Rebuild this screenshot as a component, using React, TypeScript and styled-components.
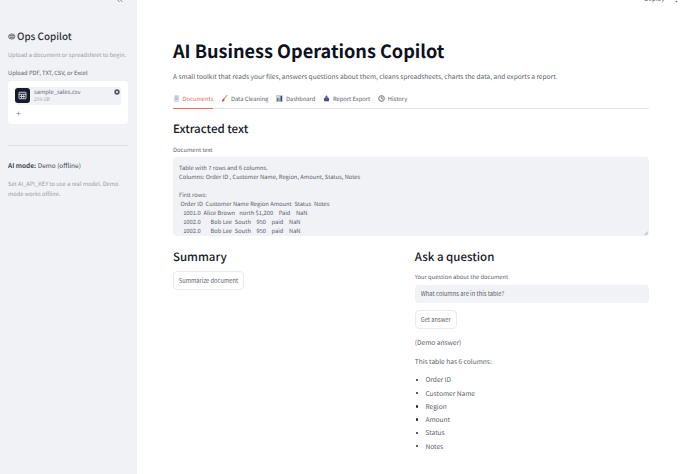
import React from "react";
import styled, { createGlobalStyle } from "styled-components";

const Global = createGlobalStyle`
  *, *::before, *::after { box-sizing: border-box; }
  html, body { margin: 0; padding: 0; background: #fff; overflow: hidden; }
  body {
    font-family: "Source Sans Pro", "Noto Sans CJK SC", "Noto Sans", sans-serif;
    color: #5b5d66;
    text-rendering: geometricPrecision;
    -webkit-font-smoothing: antialiased;
  }
  h1, h2, p, ul { margin: 0; padding: 0; font-weight: 400; }
  button, input { font-family: inherit; color: inherit; margin: 0; }
`;

const Page = styled.div`
  display: flex;
  width: 680px;
  height: 474px;
  overflow: hidden;
  white-space: nowrap;
`;

const Sidebar = styled.aside`
  width: 136.5px;
  height: 474px;
  flex: none;
  background: #f0f2f6;
  padding: 0 9px 0 8px;
  display: flex;
  flex-direction: column;
`;

const Collapse = styled.div`
  height: 28px;
  display: flex;
  justify-content: flex-end;
  padding-right: 4.5px;
  svg { margin-top: -4px; }
`;

const Brand = styled.h2`
  display: flex;
  align-items: center;
  gap: 1.5px;
  height: 16px;
  font-size: 9.85px;
  line-height: 16px;
  font-weight: 500;
  color: #31333f;
`;

const Caption = styled.p`
  font-size: 5.71px;
  line-height: 10px;
  color: #9a9ca5;
`;

const BrandCaption = styled(Caption)`
  margin-top: 6px;
`;

const Label = styled.div`
  font-size: 5.78px;
  line-height: 10px;
  height: 10px;
  color: #5b5d66;
`;

const UploadLabel = styled(Label)`
  margin-top: 8px;
`;

const UploadBox = styled.div`
  margin-top: 2.5px;
  height: 43px;
  border-radius: 4px;
  background: #fff;
  padding: 6px 6.5px 0 7px;
`;

const FileChip = styled.div`
  display: flex;
  height: 18px;
  border-radius: 3px;
  background: #f0f2f6;
  padding-right: 1.5px;
`;

const FileIcon = styled.div`
  width: 15px;
  height: 15px;
  margin-top: 1px;
  border-radius: 3px;
  background: #151a2d;
  display: flex;
  align-items: center;
  justify-content: center;
`;

const FileInfo = styled.div`
  flex: 1;
  padding-left: 4px;
`;

const FileName = styled.div`
  font-size: 5.78px;
  line-height: 8px;
  padding-top: 1px;
  height: 9px;
  color: #6a6c76;
`;

const FileSize = styled.div`
  font-size: 5px;
  line-height: 7px;
  color: #a5a7af;
`;

const RemoveIcon = styled.div`
  padding-top: 1px;
  line-height: 0;
`;

const AddFile = styled.div`
  margin: 4.5px 0 0 0.5px;
  line-height: 0;
`;

const Divider = styled.div`
  margin: 21.5px 0 14px;
  height: 1px;
  background: #dcdee3;
`;

const Mode = styled.p`
  font-size: 6.5px;
  line-height: 10px;
  height: 10px;
  color: #464852;
  b { font-weight: 600; }
`;

const ModeCaption = styled(Caption)`
  margin-top: 9px;
`;

const Main = styled.main`
  flex: 1;
  padding: 0 31.5px 0 36.5px;
  display: flex;
  flex-direction: column;
`;

const TopBar = styled.div`
  height: 38px;
  flex: none;
  display: flex;
  justify-content: flex-end;
  font-size: 6.2px;
  line-height: 10px;
  margin-right: -29px;
  gap: 10px;
  span { margin-top: -6px; }
  svg { margin-top: -1px; }
`;

const Title = styled.h1`
  height: 26px;
  line-height: 26px;
  font-size: 18.1px;
  font-weight: 700;
  color: #0e1120;
`;

const Intro = styled.p`
  margin-top: 6px;
  height: 12px;
  line-height: 12px;
  font-size: 6.59px;
`;

const Tabs = styled.nav`
  margin-top: 11px;
  height: 16px;
  display: flex;
  gap: 8px;
  border-bottom: 1px solid #e4e5e9;
`;

const Tab = styled.div<{ $active?: boolean }>`
  height: 16px;
  display: flex;
  align-items: flex-start;
  gap: 2.5px;
  font-size: 5.8px;
  line-height: 12px;
  color: ${(p) => (p.$active ? "#e2686a" : "#5b5d66")};
  border-bottom: 1px solid ${(p) => (p.$active ? "#e06a6a" : "transparent")};
  svg { margin-top: 2px; }
`;

const Heading = styled.h2`
  height: 18px;
  line-height: 18px;
  font-size: 11.5px;
  font-weight: 500;
  color: #161927;
`;

const Section = styled.section`
  margin-top: 11px;
`;

const SectionLabel = styled(Label)`
  margin-top: 7px;
`;

const TextArea = styled.div`
  position: relative;
  margin-top: 2px;
  height: 79px;
  border-radius: 4px;
  background: #f0f2f6;
  padding: 5.5px 6px 0;
  overflow: hidden;
  white-space: pre;
  font-size: 5.76px;
  word-spacing: 0.1px;
  line-height: 9px;
  color: #5b5d66;
`;

const ResizeGrip = styled.svg`
  position: absolute;
  right: 1px;
  bottom: 1px;
`;

const Columns = styled.div`
  margin-top: 12px;
  display: grid;
  grid-template-columns: 1fr 1fr;
  column-gap: 8px;
`;

const Button = styled.button<{ $width: number }>`
  display: block;
  width: ${(p) => p.$width}px;
  height: 19px;
  padding: 0;
  border: 1px solid #eaebee;
  border-radius: 4px;
  background: #fff;
  font-size: 5.76px;
  line-height: 17px;
  text-align: center;
`;

const SummaryButton = styled(Button)`
  margin-top: 5px;
`;

const AnswerButton = styled(Button)`
  margin-top: 7px;
`;

const QuestionLabel = styled(Label)`
  margin-top: 6px;
`;

const Input = styled.input`
  display: block;
  margin-top: 2.5px;
  width: 100%;
  height: 18px;
  padding: 0 6px;
  border: 0;
  border-radius: 4px;
  background: #f0f2f6;
  font-size: 5.78px;
  outline: none;
`;

const Answer = styled.p`
  height: 12px;
  line-height: 12px;
  margin-top: 7px;
  font-size: 6.6px;
`;

const List = styled.ul`
  margin-top: 6.7px;
  list-style: none;
`;

const Item = styled.li`
  display: flex;
  align-items: center;
  height: 13.25px;
  font-size: 6.6px;
  line-height: 13px;
  &::before {
    content: "";
    width: 2.4px;
    height: 2.4px;
    border-radius: 50%;
    background: #24262f;
    margin: 0 7px 0 1.3px;
  }
`;

const RobotIcon = () => (
  <svg width="7.5" height="7" viewBox="0 0 15 14">
    <ellipse cx="7.5" cy="7" rx="6.5" ry="5.2" fill="#c5c7cd" stroke="#5b5e68" strokeWidth="1.5" />
    <path d="M3 5.2h9M3.5 9h8M5.500 4.7v2M9.500 4.7v2" stroke="#5b5e68" strokeWidth="1.3" />
  </svg>
);

const SheetIcon = () => (
  <svg width="9" height="9" viewBox="0 0 18 18" fill="none" stroke="#dfe1e8" strokeWidth="1.8">
    <rect x="2" y="2.5" width="14" height="13" rx="1" />
    <path d="M2 6.5h14M7 7v8M11.5 7v8M4 11h10" />
  </svg>
);

const CloseIcon = () => (
  <svg width="6" height="6" viewBox="0 0 12 12">
    <circle cx="6" cy="6" r="5.4" fill="#555862" />
    <path d="M4 4l4 4M8 4l-4 4" stroke="#f0f2f6" strokeWidth="1.5" />
  </svg>
);

const DocIcon = () => (
  <svg width="7" height="7" viewBox="0 0 14 14">
    <path d="M3.5 1H12l-1 12H2z" fill="#dcdbe6" stroke="#bdbccb" strokeWidth=".7" />
    <path d="M4.5 4h5.7M4.3 6.5H10M4 9h5.5" stroke="#9e9db0" />
  </svg>
);

const BrushIcon = () => (
  <svg width="7" height="7" viewBox="0 0 14 14">
    <path d="M11.8.8L6.4 8" stroke="#d36a50" strokeWidth="1.9" strokeLinecap="round" />
    <path d="M4.4 7.2l3 2.2c-.7 2.5-3 3.9-6.4 3.6 1.3-.8 1.9-4.4 3.4-5.8z" fill="#a8503d" />
    <path d="M5.1 6.3l3 2.2" stroke="#d9b45b" />
  </svg>
);

const ChartIcon = () => (
  <svg width="7" height="7" viewBox="0 0 14 14">
    <path d="M.7 1h12.6v12H.7z" fill="#cbd4dd" stroke="#8d9fb2" strokeWidth=".8" />
    <path d="M2 6h3v6.5H2z" fill="#3e8c59" />
    <path d="M5.5 7h3v5.5h-3z" fill="#c8a34c" />
    <path d="M9 2h3v10.5H9z" fill="#2d4b91" />
  </svg>
);

const ExportIcon = () => (
  <svg width="7" height="7" viewBox="0 0 14 14">
    <path d="M1.500 7.500L4 5h6l2.500 2.500-1 5h-9z" fill="#354aab" />
    <path d="M7 .5l3.200 4.200H8.6V9H5.4V4.700H3.800z" fill="#4b5fb8" />
    <path d="M5.500 5h3v3h-3z" fill="#a54d69" />
  </svg>
);

const ClockIcon = () => (
  <svg width="7" height="7" viewBox="0 0 14 14" fill="none" stroke="#555761">
    <circle cx="7" cy="7" r="5.800" strokeWidth="1.500" />
    <path d="M7 3.200V7.300h3" strokeWidth="1.300" />
    <circle cx="7" cy="7" r="3.800" strokeWidth=".5" />
  </svg>
);

const tabs = [
  { name: "Documents", icon: <DocIcon /> },
  { name: "Data Cleaning", icon: <BrushIcon /> },
  { name: "Dashboard", icon: <ChartIcon /> },
  { name: "Report Export", icon: <ExportIcon /> },
  { name: "History", icon: <ClockIcon /> },
];

const columns = ["Order ID", "Customer Name", "Region", "Amount", "Status", "Notes"];

const documentText = [
  "Table with 7 rows and 6 columns.",
  "Columns: Order ID , Customer Name, Region, Amount, Status, Notes",
  "",
  "First rows:",
  " Order ID  Customer Name Region Amount  Status  Notes",
  "   1001.0  Alice Brown   north $1,200    Paid    NaN",
  "   1002.0       Bob Lee  South    950    paid    NaN",
  "   1002.0       Bob Lee  South    950    paid    NaN",
].join("\n");

export default function App() {
  return (
    <>
      <Global />
      <Page>
        <Sidebar>
          <Collapse>
            <svg width="6" height="7" viewBox="0 0 12 14" fill="none" stroke="#696b75" strokeWidth="1.500">
              <path d="M5 3L1 7.500 5 12M10.500 3l-4 4.500 4 4.500" />
            </svg>
          </Collapse>
          <Brand><RobotIcon />Ops Copilot</Brand>
          <BrandCaption>Upload a document or spreadsheet to begin.</BrandCaption>
          <UploadLabel>Upload PDF, TXT, CSV, or Excel</UploadLabel>
          <UploadBox>
            <FileChip>
              <FileIcon><SheetIcon /></FileIcon>
              <FileInfo>
                <FileName>sample_sales.csv</FileName>
                <FileSize>259.0B</FileSize>
              </FileInfo>
              <RemoveIcon><CloseIcon /></RemoveIcon>
            </FileChip>
            <AddFile>
              <svg width="5" height="5" viewBox="0 0 10 10" stroke="#858791" strokeWidth="1.300">
                <path d="M5 1v8M1 5h8" />
              </svg>
            </AddFile>
          </UploadBox>
          <Divider />
          <Mode><b>AI mode:</b> Demo (offline)</Mode>
          <ModeCaption>
            Set AI_API_KEY to use a real model. Demo
            <br />
            mode works offline.
          </ModeCaption>
        </Sidebar>
        <Main>
          <TopBar>
            <span>Deploy</span>
            <svg width="3" height="4" viewBox="0 0 3 4"><circle cx="1.500" cy="2.500" r=".8" fill="#5b5d66" /></svg>
          </TopBar>
          <Title>AI Business Operations Copilot</Title>
          <Intro>
            A small toolkit that reads your files, answers questions about them, cleans spreadsheets, charts the data, and exports a report.
          </Intro>
          <Tabs>
            {tabs.map((tab, i) => (
              <Tab key={tab.name} $active={i === 0}>{tab.icon}{tab.name}</Tab>
            ))}
          </Tabs>
          <Section>
            <Heading>Extracted text</Heading>
            <SectionLabel>Document text</SectionLabel>
            <TextArea>
              {documentText}
              <ResizeGrip width="4" height="4" viewBox="0 0 4 4" stroke="#85878e" strokeWidth=".6">
                <path d="M.5 4L4 .5M2.300 4L4 2.300" />
              </ResizeGrip>
            </TextArea>
          </Section>
          <Columns>
            <div>
              <Heading>Summary</Heading>
              <SummaryButton $width={71}>Summarize document</SummaryButton>
            </div>
            <div>
              <Heading>Ask a question</Heading>
              <QuestionLabel>Your question about the document</QuestionLabel>
              <Input defaultValue="What columns are in this table?" />
              <AnswerButton $width={42}>Get answer</AnswerButton>
              <Answer>(Demo answer)</Answer>
              <Answer>This table has 6 columns:</Answer>
              <List>
                {columns.map((name) => <Item key={name}>{name}</Item>)}
              </List>
            </div>
          </Columns>
        </Main>
      </Page>
    </>
  );
}
